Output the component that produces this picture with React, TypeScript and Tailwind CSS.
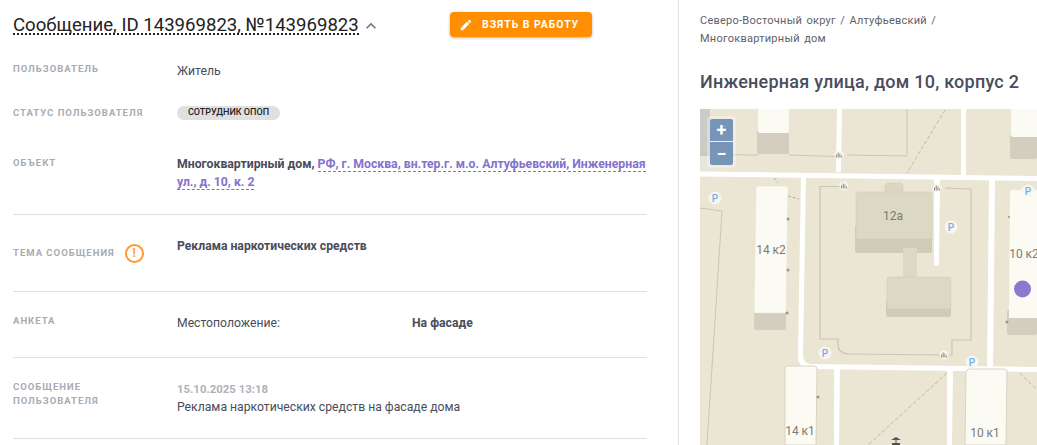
import type { ReactNode } from "react";
import { MdEdit, MdExpandLess } from "react-icons/md";

function Label({ children }: { children: ReactNode }) {
  return <div className="text-[9.5px] font-bold uppercase leading-[14px] tracking-[1px] text-[#a9abb3]">{children}</div>;
}

function ParkingMark({ x, y }: { x: number; y: number }) {
  return (
    <g>
      <circle cx={x} cy={y} r={6.5} fill="#f7f6ef" />
      <text x={x} y={y + 3.5} textAnchor="middle" fontSize="10" fontFamily="Roboto, sans-serif" fontWeight="500" fill="#6fb1ea">
        P
      </text>
    </g>
  );
}

function EntranceMark({ x, y }: { x: number; y: number }) {
  return (
    <g>
      <circle cx={x} cy={y} r={4.5} fill="#f7f6ef" />
      <path d={`M${x - 2.5} ${y + 2.5}v-3M${x - 0.8} ${y + 2.5}v-5M${x + 0.9} ${y + 2.5}v-4M${x + 2.6} ${y + 2.5}v-2`} stroke="#8d8c85" strokeWidth="1" />
    </g>
  );
}

function BuildingLabel({ x, y, children }: { x: number; y: number; children: string }) {
  return (
    <text x={x} y={y} textAnchor="middle" fontSize="12" fontFamily="Roboto, sans-serif" fill="#7b7a74">
      {children}
    </text>
  );
}

function MapDrawing() {
  const road = "#ffffff";
  const line = "#c8c5b7";
  const shade = "#d3cebf";
  const cream = "#fcfbf3";
  return (
    <svg viewBox="700 109 337 336" className="block h-[336px] w-[337px]">
      <rect x="700" y="109" width="337" height="336" fill="#ebe6d3" />
      <rect x="700" y="109" width="10" height="47" fill="#cbcbc8" />
      <rect x="700" y="156" width="10" height="15" fill="#e7e6da" />

      {/* outlines */}
      <path d="M700 154.5L758 155M789 155L836 156.5" stroke={line} fill="none" />
      <path d="M847 155L907 156V109" stroke={line} fill="none" />
      <path d="M700 208L722 211L707 445" stroke={line} fill="none" />
      <path d="M840 186.5H820V339H838V344Q838 354 850 354L944 355H952V340H971V189L945 188" stroke={line} strokeWidth="1.2" fill="none" />
      <path d="M945 110L907 173" stroke="#bdb9a9" strokeDasharray="4 2" fill="none" />
      <path d="M774 178L778 183M788 196L799 199" stroke="#aaa797" strokeDasharray="3 2" fill="none" />
      <path d="M947 373L868 445M1020 373L1037 390" stroke="#bdb9a9" strokeDasharray="4 2" fill="none" />

      {/* roads */}
      <path d="M700 171.5L1037 176V181L700 176.5Z" fill={road} />
      <path d="M837 109H842L841 172H836Z" fill={road} />
      <path d="M961 109H966V175H961Z" fill={road} />
      <path d="M801 176H806L803 355Q803 364 812 364L1037 367V372L808 369Q798 367 798 356Z" fill={road} />
      <path d="M989 179H995L993 370H987Z" fill={road} />
      <path d="M934 178H940L939 264Q939 266 936.5 266Q934 266 934 264Z" fill={road} />
      <path d="M834 368H840L839 445H834Z" fill={road} />
      <path d="M947 370H953L952 445H947Z" fill={road} />

      {/* buildings */}
      <rect x="757" y="130" width="32" height="24" rx="1" fill={shade} />
      <path d="M758 109H789V131Q789 133 787 133H760Q758 133 758 131Z" fill={cream} />
      <rect x="1010" y="134" width="27" height="25" rx="2" fill={shade} />
      <path d="M1011 109H1037V137H1013Q1011 137 1011 135Z" fill={cream} />
      <rect x="754" y="305" width="32" height="25" rx="2" fill={shade} />
      <path d="M758 186H785Q788 186 788 189L786 313H754L756 188Q756 186 758 186Z" fill={cream} stroke="#e4e0cf" strokeWidth="0.5" />
      <path d="M787 366H814Q817 366 817 369L816 445H785V368Q785 366 787 366Z" fill={cream} stroke="#d7d3c2" />
      <rect x="1007" y="310" width="30" height="25" rx="2" fill={shade} />
      <path d="M1012 190H1037V318H1009L1010 192Q1010 190 1012 190Z" fill={cream} />
      <path d="M969 369H1004Q1007 369 1007 372L1006 445H965L966 372Q966 369 969 369Z" fill={cream} stroke="#d7d3c2" />

      {/* 12a */}
      <rect x="885" y="183" width="18" height="12" rx="3" fill="#d9d6c2" stroke="#cfcbb9" strokeWidth="0.5" />
      <rect x="855" y="225" width="77" height="28" rx="2" fill="#cfcbb8" />
      <rect x="856" y="192" width="76" height="47" rx="2" fill="#dbd8c4" stroke="#cfcbb9" strokeWidth="0.5" />
      <rect x="903" y="248" width="14" height="30" fill="#dbd8c4" />
      <rect x="886" y="300" width="65" height="17" rx="2" fill="#cfcbb8" />
      <rect x="887" y="277" width="64" height="32" rx="2" fill="#dbd8c4" stroke="#cfcbb9" strokeWidth="0.5" />

      {/* dots */}
      <circle cx="788" cy="219" r="1.5" fill="#99978a" />
      <circle cx="788" cy="270" r="1.5" fill="#99978a" />
      <circle cx="787" cy="313" r="1.5" fill="#99978a" />
      <circle cx="818" cy="397" r="1.5" fill="#99978a" />
      <circle cx="1009" cy="217" r="1" fill="#99978a" />
      <circle cx="1007" cy="322" r="1.5" fill="#99978a" />

      <EntranceMark x={839} y={155} />
      <EntranceMark x={844} y={186} />
      <EntranceMark x={937} y={188} />
      <EntranceMark x={944} y={355} />

      <ParkingMark x={715} y={198} />
      <ParkingMark x={951} y={227} />
      <ParkingMark x={1028} y={191} />
      <ParkingMark x={825} y={353} />
      <ParkingMark x={972} y={362} />

      <BuildingLabel x={893} y={220}>12а</BuildingLabel>
      <BuildingLabel x={771} y={254}>14 к2</BuildingLabel>
      <BuildingLabel x={800} y={435}>14 к1</BuildingLabel>
      <BuildingLabel x={1024} y={258}>10 к2</BuildingLabel>
      <BuildingLabel x={985} y={437}>10 к1</BuildingLabel>

      <circle cx="1022.5" cy="289" r="8.5" fill="#8c78cf" />
      <path d="M891 440L896 437L901 440ZM895.5 440H896.5V445H895.5ZM892 443H900V445H892Z" fill="#55554f" />
    </svg>
  );
}

export default function App() {
  return (
    <div className="flex h-[445px] w-[1037px] overflow-hidden bg-white text-[#4a4c5a] [font-family:Roboto,sans-serif]">
      <main className="w-[679px] shrink-0 border-r border-[#e2e2e2] pl-[13px] pr-[31px]">
        <header className="flex h-[52px] items-start pt-[12px]">
          <div className="flex h-[25px] w-[437px] items-start pt-[5px]">
            <h1 className="whitespace-nowrap border-b-2 border-dotted border-[#222] text-[18.6px] font-normal leading-[16px] text-[#222]">
              Сообщение, ID 143969823, №143969823
            </h1>
            <MdExpandLess className="ml-[2px] -mt-[1px] text-[20px] text-[#757575]" />
          </div>
          <button className="flex h-[25px] w-[142px] items-center rounded-[4px] bg-[#ff8f00] pl-[9px] text-[10.5px] font-bold tracking-[0.09em] text-white shadow-[0_1px_3px_rgba(0,0,0,0.3)]">
            <MdEdit className="mr-[9px] text-[14px]" />
            ВЗЯТЬ В РАБОТУ
          </button>
        </header>

        <section className="flex h-[44px] pt-[10px]">
          <div className="w-[164px]"><Label>Пользователь</Label></div>
          <div className="pt-[1px] text-[12.2px] leading-[16px]">Житель</div>
        </section>

        <section className="flex h-[44px] items-start pt-[9px]">
          <div className="mt-[1px] w-[164px]"><Label>Статус пользователя</Label></div>
          <span className="mt-[1px] flex h-[14px] w-[103px] items-center justify-center rounded-full bg-[#e0e0e0] text-[9px] font-medium text-[#222]">
            СОТРУДНИК ОПОП
          </span>
        </section>

        <section className="flex h-[75px] border-b border-[#e0e0e0] pt-[16px]">
          <div className="w-[164px] shrink-0"><Label>Объект</Label></div>
          <div className="-mt-[1px] text-[12.25px] font-bold leading-[18px]">
            Многоквартирный дом,{" "}
            <span className="border-b border-dashed border-[#8472cc] text-[#8472cc]">РФ, г. Москва, вн.тер.г. м.о. Алтуфьевский, Инженерная</span>
            <br />
            <span className="border-b border-dashed border-[#8472cc] text-[#8472cc]">ул., д. 10, к. 2</span>
          </div>
        </section>

        <section className="flex h-[77px] border-b border-[#e0e0e0] pt-[22px]">
          <div className="flex h-[32px] w-[164px] items-center">
            <Label>Тема сообщения</Label>
            <div className="ml-[10px] flex h-[19px] w-[19px] items-center justify-center rounded-full border-2 border-[#ff9a2e] text-[12px] font-bold leading-none text-[#ff9a2e]">!</div>
          </div>
          <div className="text-[12.2px] font-bold leading-[18px]">Реклама наркотических средств</div>
        </section>

        <section className="flex h-[66px] border-b border-[#e0e0e0] pt-[22px]">
          <div className="w-[164px]"><Label>Анкета</Label></div>
          <div className="w-[235px] text-[12.2px] leading-[18px]">Местоположение:</div>
          <div className="text-[12.2px] font-bold leading-[18px]">На фасаде</div>
        </section>

        <section className="flex h-[81px] border-b border-[#e0e0e0] pt-[22px]">
          <div className="w-[164px]"><Label>Сообщение<br />пользователя</Label></div>
          <div>
            <div className="pt-[1px] text-[11.4px] font-bold leading-[16px] text-[#b0b1b7]">15.10.2025 13:18</div>
            <div className="mt-[1px] text-[12.2px] leading-[18px]">Реклама наркотических средств на фасаде дома</div>
          </div>
        </section>
      </main>

      <aside className="min-w-0 flex-1 pl-[21px] pt-[12px]">
        <p className="w-[300px] text-[11px] leading-[18px] tracking-[0.25px] [word-spacing:1.4px] text-[#5f616c]">
          Северо-Восточный округ / Алтуфьевский / Многоквартирный дом
        </p>
        <h2 className="mt-[23px] whitespace-nowrap text-[18px] font-medium leading-[22px] tracking-[0.24px] text-[#4a4d5c]">
          Инженерная улица, дом 10, корпус 2
        </h2>
        <div className="relative mt-[16px]">
          <MapDrawing />
          <div className="absolute left-[7px] top-[7px] rounded-[3px] bg-white/30 p-[3px]">
            <div className="flex h-[22px] w-[23px] items-center justify-center rounded-t-[2px] bg-[#7695b8] text-[18px] font-bold leading-none text-white">+</div>
            <div className="mt-[1px] flex h-[23px] w-[23px] items-center justify-center rounded-b-[2px] bg-[#7695b8] text-[18px] font-bold leading-none text-white">−</div>
          </div>
        </div>
      </aside>
    </div>
  );
}
